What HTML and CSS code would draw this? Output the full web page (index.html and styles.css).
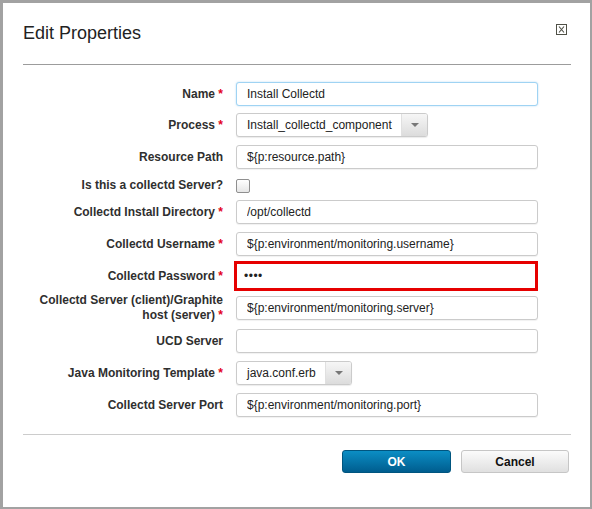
FILE: index.html
```html
<!DOCTYPE html>
<html lang="en">
<head>
<meta charset="utf-8">
<title>Edit Properties</title>
<link rel="stylesheet" href="styles.css">
</head>
<body>
<div class="dialog">
  <div class="header">
    <h1 class="title">Edit Properties</h1>
    <svg class="close" width="11" height="11" viewBox="0 0 11 11">
      <rect x="0.5" y="0.5" width="10" height="10" fill="none" stroke="#4f5046" stroke-width="1"/>
      <path d="M3 2.5 L8 8.5 M8 2.5 L3 8.5" stroke="#4f5046" stroke-width="1.1" fill="none"/>
    </svg>
  </div>
  <div class="form">
    <div class="row">
      <label class="label">Name <span class="req">*</span></label>
      <input class="field focus" type="text" value="Install Collectd">
    </div>
    <div class="row mt7">
      <label class="label">Process <span class="req">*</span></label>
      <div class="select wide"><span class="select-value">Install_collectd_component</span><span class="select-arrow"></span></div>
    </div>
    <div class="row">
      <label class="label">Resource Path</label>
      <input class="field" type="text" value="${p:resource.path}">
    </div>
    <div class="row cb-row">
      <label class="label">Is this a collectd Server?</label>
      <input class="check" type="checkbox">
    </div>
    <div class="row mt6">
      <label class="label">Collectd Install Directory <span class="req">*</span></label>
      <input class="field" type="text" value="/opt/collectd">
    </div>
    <div class="row">
      <label class="label">Collectd Username <span class="req">*</span></label>
      <input class="field" type="text" value="${p:environment/monitoring.username}">
    </div>
    <div class="row mt5 pw-row">
      <label class="label">Collectd Password <span class="req">*</span></label>
      <input class="field password" type="text" value="••••">
    </div>
    <div class="row mt1 tall-row">
      <label class="label two-line">Collectd Server (client)/Graphite host (server) <span class="req">*</span></label>
      <input class="field" type="text" value="${p:environment/monitoring.server}">
    </div>
    <div class="row mt5">
      <label class="label">UCD Server</label>
      <input class="field" type="text" value="">
    </div>
    <div class="row">
      <label class="label">Java Monitoring Template <span class="req">*</span></label>
      <div class="select narrow"><span class="select-value">java.conf.erb</span><span class="select-arrow"></span></div>
    </div>
    <div class="row">
      <label class="label">Collectd Server Port</label>
      <input class="field" type="text" value="${p:environment/monitoring.port}">
    </div>
  </div>
  <div class="footer">
    <button class="btn btn-primary" type="button">OK</button>
    <button class="btn btn-default" type="button">Cancel</button>
  </div>
</div>
</body>
</html>
```
FILE: styles.css
```css
html, body {
  margin: 0;
  padding: 0;
}
body {
  background: #a2a2a2;
  width: 592px;
  height: 509px;
  overflow: hidden;
  font-family: "Liberation Sans", Arial, sans-serif;
}
.dialog {
  margin: 3px 2px 2px 3px;
  width: 587px;
  height: 504px;
  background: #fff;
  display: flex;
  flex-direction: column;
}
.header {
  margin: 0 19px 0 20px;
  padding: 19px 0 20px;
  border-bottom: 1px solid #9c9c9c;
  display: flex;
  justify-content: space-between;
  align-items: flex-start;
}
.title {
  margin: 0;
  font-size: 18px;
  line-height: 22px;
  font-weight: normal;
  color: #222;
}
.close {
  display: block;
  margin-top: 2px;
  margin-right: 4px;
}
.form {
  padding: 17px 0 0 20px;
  display: flex;
  flex-direction: column;
}
.row {
  display: flex;
  align-items: center;
  min-height: 24px;
  margin-top: 8px;
}
.row:first-child { margin-top: 0; }
.mt7 { margin-top: 7px; }
.mt6 { margin-top: 6px; }
.mt5 { margin-top: 5px; }
.mt1 { margin-top: 1px; }
.cb-row { min-height: 17px; height: 17px; }
.pw-row { height: 30px; }
.tall-row { height: 32px; }
.label {
  width: 200px;
  margin-right: 13px;
  text-align: right;
  font-size: 12px;
  line-height: 15px;
  font-weight: bold;
  color: #2f2f2f;
}
.req {
  color: #e3001b;
}
.field {
  box-sizing: border-box;
  width: 302px;
  height: 24px;
  margin: 0;
  padding: 0 10px;
  border: 1px solid #cbcbcb;
  border-radius: 3px;
  box-shadow: 0 1px 1px rgba(0, 0, 0, 0.06);
  font-family: "Liberation Sans", Arial, sans-serif;
  font-size: 12px;
  color: #222;
  background: #fff;
  outline: none;
}
.field.focus {
  border-color: #9fd3f3;
  box-shadow: 0 0 2px rgba(120, 190, 235, 0.55);
}
.field.password {
  width: 304px;
  height: 30px;
  margin-left: -2px;
  padding-left: 7px;
  border: 3px solid #e60000;
  border-radius: 0;
  box-shadow: none;
  font-size: 12px;
  letter-spacing: 0.5px;
}
.select {
  box-sizing: border-box;
  height: 24px;
  display: flex;
  align-items: stretch;
  border: 1px solid #cbcbcb;
  border-radius: 3px;
  box-shadow: 0 1px 1px rgba(0, 0, 0, 0.08);
  overflow: hidden;
  background: #fff;
}
.select.wide { width: 192px; }
.select.narrow { width: 116px; }
.select-value {
  flex: 1;
  padding-left: 10px;
  font-size: 12px;
  line-height: 22px;
  color: #222;
  white-space: nowrap;
}
.select-arrow {
  width: 25px;
  border-left: 1px solid #e0e0e0;
  background: linear-gradient(#f6f6f6, #dcdcdc);
  display: flex;
  align-items: center;
  justify-content: center;
}
.select-arrow::after {
  content: "";
  width: 0;
  height: 0;
  border-left: 4px solid transparent;
  border-right: 4px solid transparent;
  border-top: 4px solid #777;
}
.check {
  -webkit-appearance: none;
  appearance: none;
  box-sizing: border-box;
  width: 14px;
  height: 14px;
  margin: 0;
  border: 1px solid #8f8f8f;
  border-radius: 2px;
  background: linear-gradient(#ffffff, #e6e6e6);
}
.footer {
  margin: 17px 19px 0 20px;
  padding-top: 15px;
  border-top: 1px solid #cccccc;
  display: flex;
  justify-content: flex-end;
  gap: 10px;
  padding-right: 2px;
}
.btn {
  box-sizing: border-box;
  height: 23px;
  border-radius: 3px;
  font-family: "Liberation Sans", Arial, sans-serif;
  font-size: 12px;
  font-weight: bold;
  padding: 0;
  cursor: pointer;
}
.btn-primary {
  width: 109px;
  color: #fff;
  border: 1px solid #00557f;
  background: linear-gradient(#0b8ec4, #005d8f);
}
.btn-default {
  width: 108px;
  color: #111;
  border: 1px solid #c6c6c6;
  background: linear-gradient(#fbfbfb, #e0e0e0);
}
```
